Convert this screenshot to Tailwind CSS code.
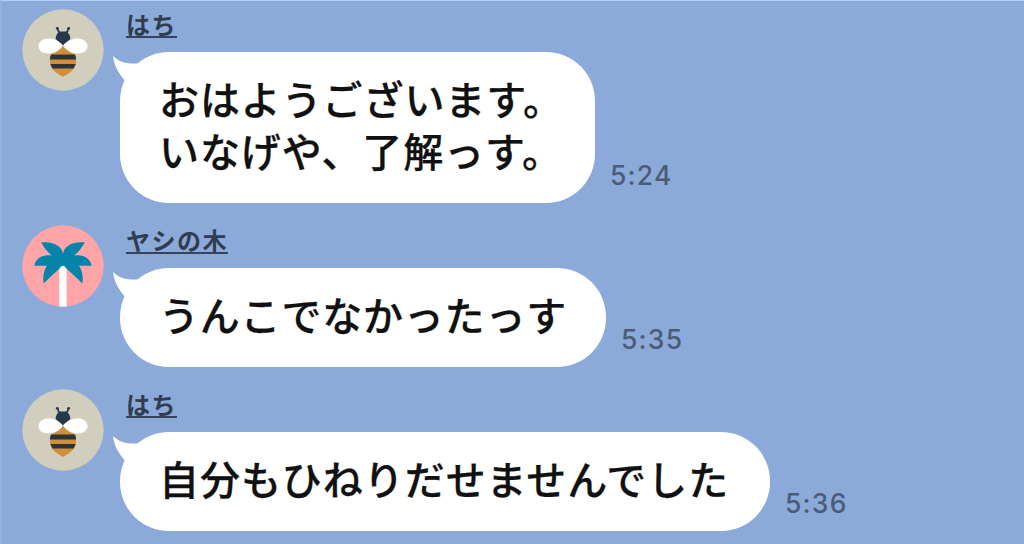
<!DOCTYPE html>
<html lang="ja">
<head>
  <meta charset="UTF-8" />
  <meta name="viewport" content="width=device-width, initial-scale=1.0" />
  <title>トーク</title>
  <script src="https://cdn.jsdelivr.net/npm/@tailwindcss/browser@4"></script>
</head>
<body class="bg-[#8caad9] h-screen overflow-hidden border-t border-l-2 border-t-[#b4d2f8] border-l-[#93b2e2] font-['Noto_Sans_CJK_JP',sans-serif]">

  <!-- shared shapes -->
  <svg class="hidden">
    <symbol id="bee" viewBox="0 0 82 82">
      <circle cx="41" cy="41" r="40.7" fill="#d1cebd" />
      <path d="M35.500 19.300Q36 22.500 38.500 24.500M46.500 19.300Q46 22.500 43.500 24.500" fill="none" stroke="#26394a" stroke-width="1.800" />
      <circle cx="35.300" cy="19.300" r="1.400" fill="#26394a" />
      <circle cx="46.700" cy="19.300" r="1.400" fill="#26394a" />
      <path d="M37.500 22.500H44.500Q48.300 25 48.300 30L41 37L33.700 30Q33.700 25 37.500 22.500Z" fill="#26394a" />
      <path d="M41 36.500C43 40.500 47 43 52.500 45C54 47.500 54.500 51 53.800 55C52.500 62 46 64.500 41 68C36 64.500 29.500 62 28.200 55C27.500 51 28 47.500 29.500 45C35 43 39 40.500 41 36.500Z" fill="#d08f38" />
      <path d="M29 45.500H53L54 49V50.500H28V49ZM28.300 55H53.700L51.500 59.500H30.500Z" fill="#2b3538" />
      <path d="M41 36.500C36 30.500 29 28.500 22.500 30C14.500 32.500 14.500 42 22.500 44C30 45.500 36 43 41 36.500C46 43 52 45.500 59.500 44C67.500 42 67.500 32.500 59.500 30C53 28.500 46 30.500 41 36.500Z" fill="#fff" />
    </symbol>
    <symbol id="palm" viewBox="0 0 82 82">
      <circle cx="41" cy="41" r="40.700" fill="#ffa5a8" />
      <path d="M41 29C42 21.500 50 16 62.800 17.500C60.500 22 57 26.500 52 30.500C61 29 68 32.500 69.700 40.700H57C60 45 61.500 51 60.300 58.500C54.500 52.500 49 47.500 43.500 43H38.500C33 47.500 27.500 52.500 21.700 58.500C20.500 51 22 45 25 40.700H12.300C14 32.500 21 29 30 30.500C25 26.500 21.500 22 19.200 17.500C32 16 40 21.500 41 29Z" fill="#0584a9" />
      <path d="M37.200 44Q41 37.500 44.600 44V81.500H37.200Z" fill="#fff" />
    </symbol>
    <symbol id="tail" viewBox="0 0 34 30">
      <path d="M0 0C5 5 12 8.300 24.500 7.500L34 10V30H18L12 24.500C5 17 1 9 0 0Z" fill="#fff" />
    </symbol>
  </svg>

  <main class="flex flex-col gap-[22px] pt-2 pl-5">
    <section class="flex items-start">
      <svg class="size-[82px] shrink-0"><use href="#bee" /></svg>
      <div class="pl-4">
        <div class="h-[43px] pl-1.5">
          <span class="block w-fit h-[29px] border-b-2 border-[#35445b] text-[24px] leading-[30px] tracking-[1.500px] font-bold text-[#303d50]">はち</span>
        </div>
        <div class="flex items-end gap-[15px]">
          <div class="relative w-[475px] h-[151px] rounded-[49px] bg-white pl-[39px] pt-5 text-[40px] leading-[52px] tracking-[0.900px] font-medium text-[#111] whitespace-nowrap [-webkit-text-stroke:0.25px_#111]">
            <svg class="absolute left-[-7px] top-1 w-[34px] h-[30px]"><use href="#tail" /></svg>
            <p>おはようございます。</p>
            <p>いなげや、了解っす。</p>
          </div>
          <time class="pb-[11px] font-[Inter,sans-serif] font-medium text-[26.500px] leading-[34px] tracking-[1.200px] text-[#4b5c77]">5:24</time>
        </div>
      </div>
    </section>

    <section class="flex items-start">
      <svg class="size-[82px] shrink-0"><use href="#palm" /></svg>
      <div class="pl-4">
        <div class="h-[43px] pl-1.5">
          <span class="block w-fit h-[29px] border-b-2 border-[#35445b] text-[24px] leading-[30px] tracking-[1.500px] font-bold text-[#303d50]">ヤシの木</span>
        </div>
        <div class="flex items-end gap-[15px]">
          <div class="relative w-[486px] h-[99px] rounded-[49px] bg-white pl-[39px] pt-5 text-[40px] leading-[52px] tracking-[0.800px] font-medium text-[#111] whitespace-nowrap [-webkit-text-stroke:0.25px_#111]">
            <svg class="absolute left-[-7px] top-1 w-[34px] h-[30px]"><use href="#tail" /></svg>
            <p>うんこでなかったっす</p>
          </div>
          <time class="pb-[11px] font-[Inter,sans-serif] font-medium text-[26.500px] leading-[34px] tracking-[1.200px] text-[#4b5c77]">5:35</time>
        </div>
      </div>
    </section>

    <section class="flex items-start">
      <svg class="size-[82px] shrink-0"><use href="#bee" /></svg>
      <div class="pl-4">
        <div class="h-[43px] pl-1.5">
          <span class="block w-fit h-[29px] border-b-2 border-[#35445b] text-[24px] leading-[30px] tracking-[1.500px] font-bold text-[#303d50]">はち</span>
        </div>
        <div class="flex items-end gap-[15px]">
          <div class="relative w-[650px] h-[99px] rounded-[49px] bg-white pl-[39px] pt-5 text-[40px] leading-[52px] tracking-[0.950px] font-medium text-[#111] whitespace-nowrap [-webkit-text-stroke:0.25px_#111]">
            <svg class="absolute left-[-7px] top-1 w-[34px] h-[30px]"><use href="#tail" /></svg>
            <p>自分もひねりだせませんでした</p>
          </div>
          <time class="pb-[11px] font-[Inter,sans-serif] font-medium text-[26.500px] leading-[34px] tracking-[1.200px] text-[#4b5c77]">5:36</time>
        </div>
      </div>
    </section>
  </main>

</body>
</html>
